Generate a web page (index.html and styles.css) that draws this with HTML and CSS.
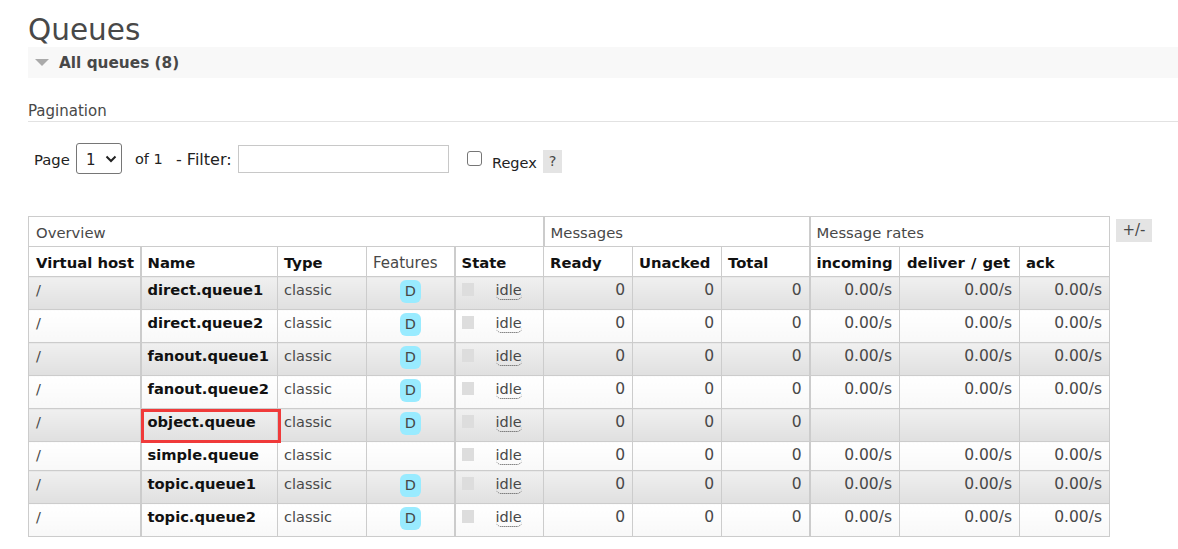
FILE: index.html
```html
<!doctype html>
<html>
<head>
  <link rel="stylesheet" href="styles.css">
</head>
<body>
  <h1 class="title">Queues</h1>
  <div class="section-head"><span class="arrow"></span><span class="section-name">All queues (8)</span></div>

  <div class="pagination-head">Pagination</div>

  <div class="filter-row">
    <span class="page-label">Page</span>
    <span class="fake-select"><span class="select-value">1</span>
      <svg class="chevron" width="12" height="8" viewBox="0 0 12 8"><path d="M1.5 1.5 L6 6 L10.5 1.5" fill="none" stroke="#222" stroke-width="2"/></svg>
    </span>
    <span class="of-label">of 1</span>
    <span class="filter-label">- Filter:</span>
    <span class="filter-input"></span>
    <span class="check"></span>
    <span class="regex-label">Regex</span>
    <span class="help">?</span>
  </div>

  <div class="table-wrap">
    <table class="queues">
      <colgroup>
        <col class="c-vhost"><col class="c-name"><col class="c-type"><col class="c-feat"><col class="c-state">
        <col class="c-num"><col class="c-num"><col class="c-total">
        <col class="c-in"><col class="c-get"><col class="c-ack">
      </colgroup>
      <thead>
        <tr class="group">
          <th colspan="5" class="sep">Overview</th>
          <th colspan="3" class="sep">Messages</th>
          <th colspan="3">Message rates</th>
        </tr>
        <tr class="heads">
          <th class="thick">Virtual host</th><th>Name</th><th>Type</th><th class="plain">Features</th><th class="sep-l">State</th>
          <th>Ready</th><th>Unacked</th><th class="sep">Total</th>
          <th>incoming</th><th class="deliver">deliver / get</th><th>ack</th>
        </tr>
      </thead>
      <tbody>
        <tr class="odd">
          <td class="thick">/</td><td class="name">direct.queue1</td><td>classic</td><td class="feat"><span class="badge">D</span></td>
          <td class="sep-l"><span class="state"><span class="dot"></span><span class="idle">idle</span></span></td>
          <td class="r">0</td><td class="r">0</td><td class="r sep">0</td>
          <td class="r">0.00/s</td><td class="r">0.00/s</td><td class="r">0.00/s</td>
        </tr>
        <tr class="even">
          <td class="thick">/</td><td class="name">direct.queue2</td><td>classic</td><td class="feat"><span class="badge">D</span></td>
          <td class="sep-l"><span class="state"><span class="dot"></span><span class="idle">idle</span></span></td>
          <td class="r">0</td><td class="r">0</td><td class="r sep">0</td>
          <td class="r">0.00/s</td><td class="r">0.00/s</td><td class="r">0.00/s</td>
        </tr>
        <tr class="odd">
          <td class="thick">/</td><td class="name">fanout.queue1</td><td>classic</td><td class="feat"><span class="badge">D</span></td>
          <td class="sep-l"><span class="state"><span class="dot"></span><span class="idle">idle</span></span></td>
          <td class="r">0</td><td class="r">0</td><td class="r sep">0</td>
          <td class="r">0.00/s</td><td class="r">0.00/s</td><td class="r">0.00/s</td>
        </tr>
        <tr class="even">
          <td class="thick">/</td><td class="name">fanout.queue2</td><td>classic</td><td class="feat"><span class="badge">D</span></td>
          <td class="sep-l"><span class="state"><span class="dot"></span><span class="idle">idle</span></span></td>
          <td class="r">0</td><td class="r">0</td><td class="r sep">0</td>
          <td class="r">0.00/s</td><td class="r">0.00/s</td><td class="r">0.00/s</td>
        </tr>
        <tr class="odd">
          <td class="thick">/</td><td class="name marked">object.queue<span class="red-box"></span></td><td>classic</td><td class="feat"><span class="badge">D</span></td>
          <td class="sep-l"><span class="state"><span class="dot"></span><span class="idle">idle</span></span></td>
          <td class="r">0</td><td class="r">0</td><td class="r sep">0</td>
          <td class="r"></td><td class="r"></td><td class="r"></td>
        </tr>
        <tr class="even short">
          <td class="thick">/</td><td class="name">simple.queue</td><td>classic</td><td class="feat"></td>
          <td class="sep-l"><span class="state"><span class="dot"></span><span class="idle">idle</span></span></td>
          <td class="r">0</td><td class="r">0</td><td class="r sep">0</td>
          <td class="r">0.00/s</td><td class="r">0.00/s</td><td class="r">0.00/s</td>
        </tr>
        <tr class="odd">
          <td class="thick">/</td><td class="name">topic.queue1</td><td>classic</td><td class="feat"><span class="badge">D</span></td>
          <td class="sep-l"><span class="state"><span class="dot"></span><span class="idle">idle</span></span></td>
          <td class="r">0</td><td class="r">0</td><td class="r sep">0</td>
          <td class="r">0.00/s</td><td class="r">0.00/s</td><td class="r">0.00/s</td>
        </tr>
        <tr class="even">
          <td class="thick">/</td><td class="name">topic.queue2</td><td>classic</td><td class="feat"><span class="badge">D</span></td>
          <td class="sep-l"><span class="state"><span class="dot"></span><span class="idle">idle</span></span></td>
          <td class="r">0</td><td class="r">0</td><td class="r sep">0</td>
          <td class="r">0.00/s</td><td class="r">0.00/s</td><td class="r">0.00/s</td>
        </tr>
      </tbody>
    </table>
    <span class="plus-minus">+/-</span>
  </div>
</body>
</html>
```

FILE: styles.css
```css
body {
  margin: 0;
  padding-left: 28px;
  background: #ffffff;
  color: #484848;
  font-family: "DejaVu Sans", Verdana, sans-serif;
  font-size: 14.5px;
  overflow: hidden;
}
.title {
  margin: 0;
  height: 47px;
  padding-top: 12px;
  box-sizing: border-box;
  font-size: 29.5px;
  line-height: 37px;
  font-weight: normal;
  color: #484848;
}
.section-head {
  height: 31px;
  background: #f8f8f8;
  display: flex;
  align-items: center;
  padding-left: 7px;
}
.arrow {
  width: 0;
  height: 0;
  border-left: 7px solid transparent;
  border-right: 7px solid transparent;
  border-top: 7px solid #aaaaaa;
  margin-right: 10px;
}
.section-name {
  font-weight: bold;
  font-size: 15.3px;
}
.pagination-head {
  margin-top: 22px;
  height: 21px;
  line-height: 22px;
  font-size: 15px;
  border-bottom: 1px solid #e2e2e2;
}
.filter-row {
  display: flex;
  align-items: flex-start;
  margin-top: 22px;
  height: 72px;
  padding-left: 6px;
  color: #222222;
}
.page-label {
  margin-top: 7px;
  width: 42px;
  font-size: 14.8px;
}
.fake-select {
  width: 35px;
  height: 29px;
  border: 1px solid #767676;
  border-radius: 3px;
  display: flex;
  align-items: center;
  padding-left: 9px;
  margin-top: -1px;
  font-size: 15px;
}
.select-value {
  padding-top: 2px;
}
.chevron {
  margin-left: 9px;
}
.of-label {
  margin-top: 7px;
  margin-left: 13px;
  width: 41px;
}
.filter-label {
  margin-top: 6px;
  width: 62px;
  font-size: 16px;
}
.filter-input {
  width: 209px;
  height: 26px;
  border: 1px solid #c8c8c8;
  margin-top: 1px;
}
.check {
  width: 13px;
  height: 13px;
  border: 1px solid #767676;
  border-radius: 3px;
  margin: 7px 0 0 18px;
}
.regex-label {
  margin: 11px 0 0 10px;
  width: 51px;
}
.help {
  width: 19px;
  height: 23px;
  margin-top: 6px;
  background: #e4e4e4;
  text-align: center;
  line-height: 23px;
  color: #484848;
}
.table-wrap {
  display: flex;
  align-items: flex-start;
}
.queues {
  border-collapse: collapse;
  table-layout: fixed;
  width: 1082px;
  border: 1px solid #cccccc;
}
.c-vhost { width: 112px; }
.c-name { width: 137px; }
.c-type { width: 89px; }
.c-feat { width: 88px; }
.c-state { width: 89px; }
.c-num { width: 89px; }
.c-total { width: 88px; }
.c-in { width: 90px; }
.c-get { width: 120px; }
.c-ack { width: 90px; }
.queues th,
.queues td {
  border: 1px solid #cccccc;
  padding: 0 7px;
  text-align: left;
  white-space: nowrap;
  overflow: visible;
}
.queues .group th:nth-child(n+2),
.queues .heads th:nth-child(n+2),
.queues tbody td:nth-child(n+2) {
  padding-left: 6px;
}
.queues .group th,
.queues .heads th {
  padding-top: 2px;
}
.group th {
  height: 27px;
  font-weight: normal;
  color: #484848;
  font-size: 14.8px;
}
.heads th {
  height: 27px;
  color: #111111;
  font-weight: bold;
  font-size: 14.8px;
}
.queues .heads th.deliver {
  padding-left: 7px;
  word-spacing: 1px;
}
.heads th.plain {
  font-weight: normal;
  color: #484848;
  font-size: 15px;
}
.queues .sep {
  border-right: 2px solid #cccccc;
}
.queues .sep-l {
  border-left: 2px solid #cccccc;
}
.queues .thick {
  border-right: 2px solid #cccccc;
}
tbody tr {
  height: 33px;
}
tbody tr.short {
  height: 29px;
}
.queues td {
  vertical-align: top;
  padding-top: 4px;
  line-height: 18px;
  height: 32px;
  box-sizing: border-box;
}
.queues tr.short td {
  height: 29px;
}
.odd td {
  background: linear-gradient(to bottom, #f0f0f0, #e0e0e0);
}
.even td {
  background: linear-gradient(to bottom, #ffffff, #f8f8f8);
}
.queues td.name {
  font-weight: bold;
  color: #111111;
  font-size: 14.7px;
  position: relative;
}
.queues td.r {
  text-align: right;
  font-size: 15.5px;
}
.queues td.feat {
  text-align: center;
  padding: 0 6px 0 0;
}
.badge {
  display: inline-block;
  width: 21px;
  height: 23px;
  margin-top: 3px;
  background: #99ebff;
  border-radius: 6px;
  text-align: center;
  line-height: 23px;
}
.state {
  display: flex;
  align-items: flex-start;
}
.dot {
  width: 12px;
  height: 13px;
  margin-top: 2px;
  background: #dddddd;
  margin-right: 22px;
}
.idle {
  border-bottom: 1px dotted #484848;
  height: 18px;
  border-radius: 0 0 5px 5px;
}
.red-box {
  position: absolute;
  z-index: 1;
  left: -1px;
  top: 0;
  width: 140px;
  height: 34px;
  border: 3px solid #f03a3a;
  box-sizing: border-box;
}
.plus-minus {
  margin-left: 6px;
  margin-top: 3px;
  width: 36px;
  height: 23px;
  background: #e4e4e4;
  text-align: center;
  line-height: 23px;
  font-size: 15px;
}
```
